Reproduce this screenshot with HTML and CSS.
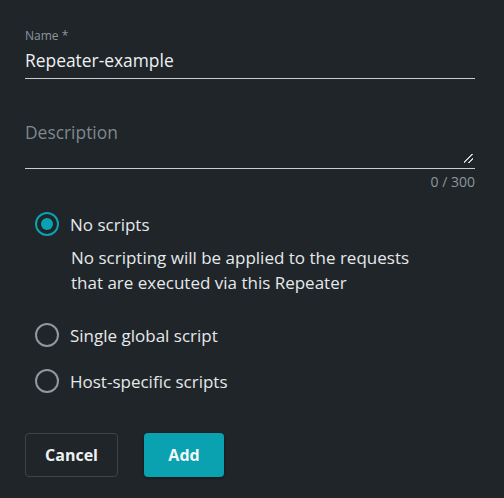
FILE: index.html
```html
<!DOCTYPE html>
<html>
<head>
<meta charset="utf-8">
<link rel="stylesheet" href="styles.css">
</head>
<body>
<form class="dialog">
  <div class="field">
    <label class="label">Name *</label>
    <div class="input">Repeater-example</div>
  </div>
  <div class="field field-desc">
    <div class="textarea">
      <span class="placeholder">Description</span>
      <span class="resize"></span>
    </div>
    <div class="counter">0 / 300</div>
  </div>
  <div class="options">
    <div class="option">
      <span class="radio checked"></span>
      <span class="opt-label">No scripts</span>
    </div>
    <p class="opt-help">No scripting will be applied to the requests<br>that are executed via this Repeater</p>
    <div class="option">
      <span class="radio"></span>
      <span class="opt-label">Single global script</span>
    </div>
    <div class="option">
      <span class="radio"></span>
      <span class="opt-label">Host-specific scripts</span>
    </div>
  </div>
  <div class="actions">
    <button type="button" class="btn btn-cancel">Cancel</button>
    <button type="button" class="btn btn-add">Add</button>
  </div>
</form>
</body>
</html>
```
FILE: styles.css
```css
html, body {
  margin: 0;
  padding: 0;
  background: #1f2529;
  height: 100%;
}
body {
  font-family: "Open Sans", "Noto Sans", sans-serif;
  color: #e6e9ea;
}
.dialog {
  padding: 29px 29px 0 25px;
  display: flex;
  flex-direction: column;
}
.field {
  display: flex;
  flex-direction: column;
}
.label {
  font-size: 12px;
  line-height: 14px;
  color: #8c969c;
}
.input {
  font-size: 17.4px;
  line-height: 24px;
  margin-top: 5px;
  padding-bottom: 6px;
  border-bottom: 1px solid #c9cdcf;
  color: #eef0f1;
}
.field-desc {
  margin-top: 38px;
}
.textarea {
  position: relative;
  height: 51px;
  border-bottom: 1px solid #c9cdcf;
}
.placeholder {
  display: block;
  font-size: 17.4px;
  line-height: 24px;
  color: #7e888d;
  padding-top: 3px;
}
.resize {
  position: absolute;
  right: 2px;
  bottom: 5px;
  width: 9px;
  height: 9px;
  background: linear-gradient(135deg, transparent 44%, #c9cdcf 44%, #c9cdcf 52%, transparent 52%, transparent 70%, #c9cdcf 70%, #c9cdcf 78%, transparent 78%);
}
.counter {
  align-self: flex-end;
  font-size: 14px;
  line-height: 16px;
  margin-top: 5px;
  color: #8c969c;
}
.options {
  margin-top: 22px;
  padding-left: 10px;
  display: flex;
  flex-direction: column;
}
.option {
  display: flex;
  align-items: center;
  gap: 11px;
  height: 24px;
}
.radio {
  box-sizing: border-box;
  width: 24px;
  height: 24px;
  flex: none;
  border-radius: 50%;
  border: 2px solid #8e999f;
  display: flex;
  align-items: center;
  justify-content: center;
}
.radio.checked {
  border-color: #0aa2b1;
}
.radio.checked::after {
  content: "";
  width: 12px;
  height: 12px;
  border-radius: 50%;
  background: #0aa2b1;
}
.opt-label {
  font-size: 17px;
  color: #e6e9ea;
}
.opt-help {
  margin: 9px 0 28px 36px;
  font-size: 17px;
  line-height: 25px;
  color: #e6e9ea;
}
.option + .option {
  margin-top: 22px;
}
.actions {
  margin-top: 40px;
  display: flex;
  gap: 26px;
}
.btn {
  font-family: inherit;
  font-size: 16px;
  font-weight: 700;
  height: 44px;
  border-radius: 4px;
  cursor: pointer;
}
.btn-cancel {
  width: 93px;
  background: transparent;
  color: #eef0f1;
  border: 1px solid #3d4448;
}
.btn-add {
  width: 80px;
  background: #0aa2b1;
  color: #f4f7f8;
  border: none;
  box-shadow: 0 1px 3px rgba(0,0,0,0.4);
}
```
